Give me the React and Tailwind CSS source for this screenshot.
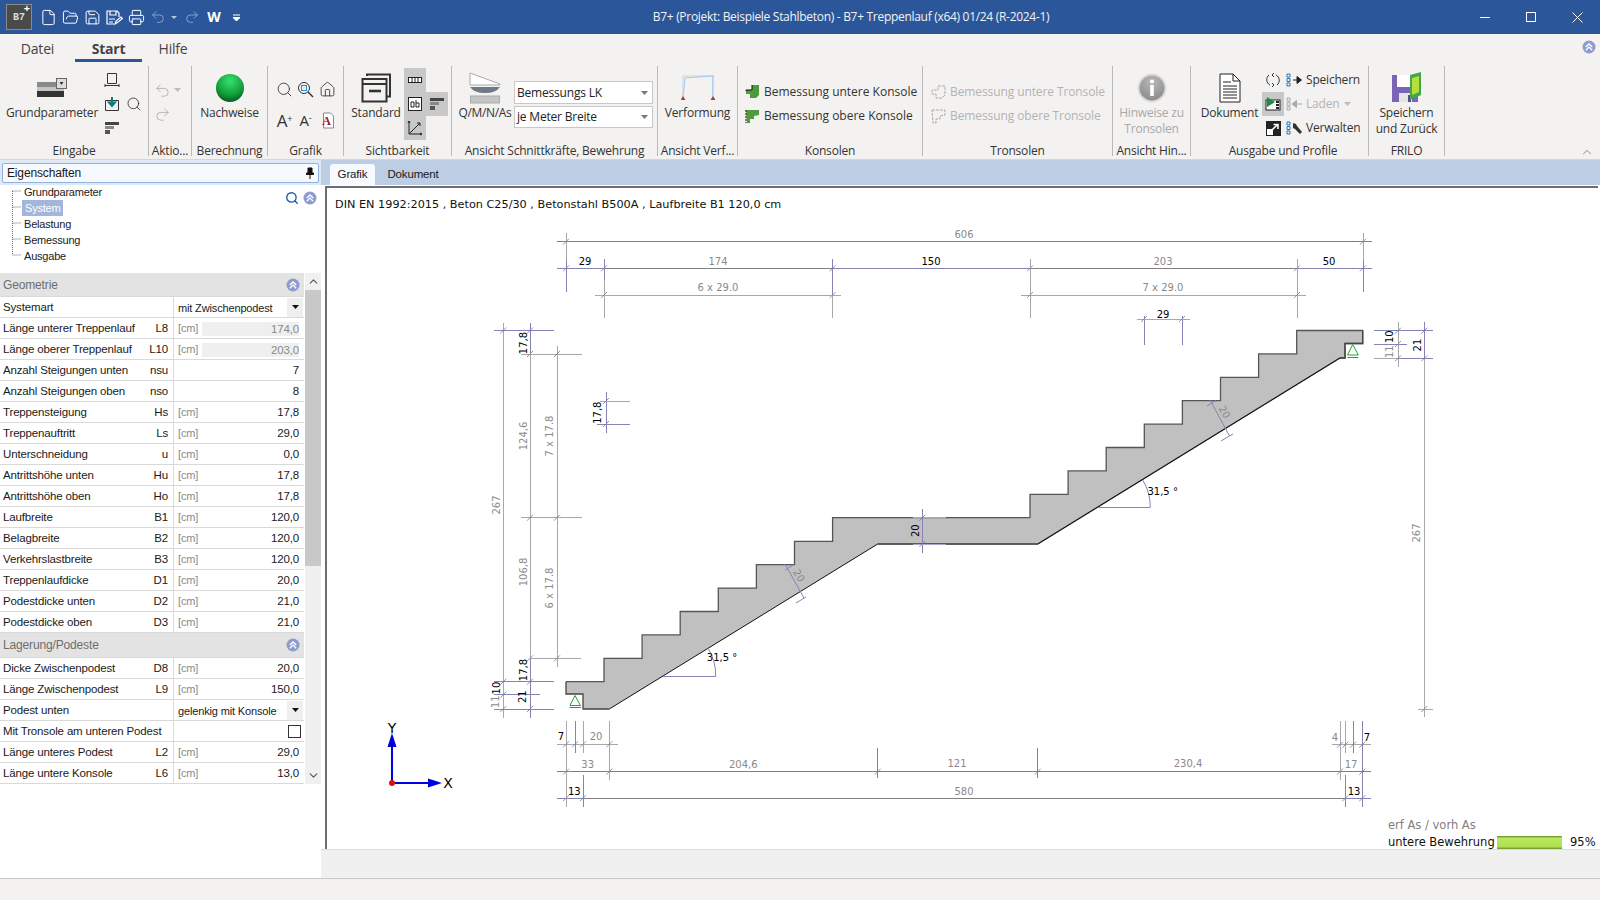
import React from "react";
import { File, FolderOpen, Save, Printer, Undo2, Redo2, Search, House, ChevronUp, ChevronDown } from "lucide-react";

const G = "#a8a8a8";
const D = "#808080";
const P = "#8583b5";

// steps of the stair, page coordinates
const stair =
  "566,681.7 604,681.7 604,658.3 642.1,658.3 642.1,634.9 680.2,634.9 680.2,611.5 718.3,611.5 718.3,588.1 756.4,588.1 756.4,564.7 794.5,564.7 794.5,541.3 832.6,541.3 832.6,517.7 1030,517.7 1030,494.3 1068.1,494.3 1068.1,470.9 1106.2,470.9 1106.2,447.5 1144.3,447.5 1144.3,424.1 1182.4,424.1 1182.4,400.7 1220.5,400.7 1220.5,377.3 1258.6,377.3 1258.6,353.9 1296.7,353.9 1296.7,330.5 1362.7,330.5 1362.7,343.5 1345,343.5 1345,358 1340,358 1037.7,544 877.7,544 609.3,709 583,709 583,694 566,694";

const lines = [
  // top dimension chains
  [557, 241.7, 1372, 241.7, D], [557, 268.3, 604, 268.3, P], [604, 268.3, 832.6, 268.3, D], [832.6, 268.3, 1030, 268.3, P], [1030, 268.3, 1297, 268.3, D], [1297, 268.3, 1372, 268.3, P],
  [595, 295, 841, 295, G], [1021, 295, 1306, 295, G],
  [566, 233, 566, 260, G], [566, 260, 566, 292, P], [1363, 233, 1363, 260, G], [1363, 260, 1363, 292, P],
  [604, 259, 604, 280, P], [604, 280, 604, 318, G], [832.6, 259, 832.6, 295, P], [832.6, 295, 832.6, 318, G],
  [1030, 259, 1030, 318, G], [1297, 259, 1297, 318, G],
  [1144, 316, 1144, 345, P], [1182, 316, 1182, 345, P], [1137, 319, 1190, 319, G],
  // left chains
  [503.3, 323, 503.3, 718, G], [530, 323, 530, 354, P], [530, 354, 530, 658, G], [530, 658, 530, 718, P], [557, 346, 557, 667, G],
  [494, 330.5, 554, 330.5, P], [521, 354, 582, 354, G], [521, 517.7, 582, 517.7, G], [530, 658.3, 581, 658.3, G], [494, 681.7, 554, 681.7, P], [494, 694.7, 540, 694.7, P], [494, 709, 554, 709, P],
  [606, 392, 606, 433, P], [600, 401, 630, 401, G], [597, 424, 630, 424, P],
  // right chains
  [1398, 322, 1398, 367, G], [1424.3, 322, 1424.3, 358, P], [1424.3, 358, 1424.3, 717, G],
  [1374, 330.7, 1433, 330.7, P], [1374, 344, 1407, 344, P], [1374, 358.3, 1398, 358.3, G], [1398, 358.3, 1433, 358.3, P], [1418, 709, 1433, 709, G],
  // landing thickness
  [922.3, 509, 922.3, 553, P], [913, 517.7, 946, 517.7, "#a9a6c9"], [913, 544, 946, 544, "#a9a6c9"],
  // flight thickness
  [785, 564, 804, 598, P], [1210, 400, 1229.6, 436, P], [785, 570, 794, 564.5, P], [796, 603, 806, 597, P], [1207, 406, 1216, 400.5, P], [1221, 441, 1233, 434, P],
  // bottom chains
  [557, 744.3, 618, 744.3, G], [1332, 744.7, 1371, 744.7, G], [557, 771.7, 1371, 771.7, D], [557, 798.2, 583, 798.2, P], [583, 798.2, 1345, 798.2, D], [1345, 798.2, 1371, 798.2, P],
  [566, 721, 566, 807, G], [575, 721, 575, 753, P], [583, 721, 583, 753, G], [583, 775, 583, 807, P], [609.3, 721, 609.3, 780, G],
  [877.7, 748, 877.7, 778, D], [1037.7, 748, 1037.7, 778, D],
  [1340, 721, 1340, 780, G], [1345.3, 721, 1345.3, 753, G], [1345.3, 775, 1345.3, 807, P], [1353, 721, 1353, 753, P], [1362.3, 721, 1362.3, 807, P],
  // angle legs
  [663.3, 676.7, 715.7, 676.7, P], [1098.3, 507, 1150.3, 507, P],
];

const ticks = [
  [566, 241.7], [1363, 241.7], [566, 268.3], [604, 268.3], [832.6, 268.3], [1030, 268.3], [1297, 268.3], [1363, 268.3], [604, 295], [832.6, 295], [1030, 295], [1297, 295],
  [1144, 319], [1182, 319], [606, 401], [606, 424],
  [503.3, 330.5], [530, 330.5], [530, 354], [557, 354], [530, 517.7], [557, 517.7], [530, 658.3], [557, 658.3], [503.3, 681.7], [530, 681.7], [503.3, 694.7], [503.3, 709], [530, 709],
  [1398, 330.7], [1424.3, 330.7], [1398, 344], [1398, 358.3], [1424.3, 358.3], [1424.3, 709],
  [922.3, 517.7], [922.3, 544],
  [566, 744.3], [575, 744.3], [583, 744.3], [609.3, 744.3], [566, 771.7], [609.3, 771.7], [877.7, 771.7], [1037.7, 771.7], [1340, 771.7], [1362.3, 771.7], [566, 798.2], [583, 798.2], [1345.3, 798.2], [1362.3, 798.2],
  [1340, 744.7], [1345.3, 744.7], [1353, 744.7], [1362.3, 744.7],
];

// x, y, text, black?, rotation
const labels = [
  [964, 234, "606"], [585, 261, "29", 1], [718, 261, "174"], [931, 261, "150", 1], [1163, 261, "203"], [1329, 261, "50", 1], [718, 287, "6 x 29.0"], [1163, 287, "7 x 29.0"], [1163, 314, "29", 1],
  [523, 343, "17,8", 1, -90], [496, 505, "267", 0, -90], [523, 436, "124,6", 0, -90], [523, 572, "106,8", 0, -90], [549, 436, "7 x 17.8", 0, -90], [549, 588, "6 x 17.8", 0, -90],
  [598, 412.7, "17,8", 1, -90], [523, 670, "17,8", 1, -90], [496, 688, "10", 1, -90], [496, 701.7, "11", 0, -90], [523, 696.7, "21", 1, -90],
  [1390, 336.7, "10", 1, -90], [1390, 351.7, "11", 0, -90], [1417, 345, "21", 1, -90], [1416.5, 533, "267", 0, -90],
  [916, 530.7, "20", 1, -90], [799, 575.5, "20", 0, 60], [1224.5, 412, "20", 0, 60],
  [722, 657.7, "31,5 °", 1], [1162.7, 491.7, "31,5 °", 1],
  [561, 736.7, "7", 1], [596, 736.7, "20"], [587.7, 764, "33"], [743.3, 764, "204,6"], [574.3, 791, "13", 1], [957, 763.5, "121"], [1188, 763.5, "230,4"], [964, 791, "580"],
  [1335, 737, "4"], [1367, 737, "7", 1], [1351, 764, "17"], [1354, 791, "13", 1],
];

// sharp 1px lines for everything axis aligned
const snap = (v) => Math.floor(v) + 0.5;

function StairDrawing() {
  return (
    <svg width="1271" height="661" viewBox="327 188 1271 661" className="block font-['DejaVu_Sans',sans-serif]">
      <polygon points={stair} fill="#c0c0c0" />
      <polyline points={stair.split(" ").slice(0, 38).join(" ")} fill="none" stroke="#555" strokeWidth="1.3" />
      <polyline points="1340,358 1037.7,544" fill="none" stroke="#111" strokeWidth="1" />
      <polyline points="877.7,544 609.3,709" fill="none" stroke="#111" strokeWidth="1" />
      <polyline points="1037.7,544 877.7,544" fill="none" stroke="#555" strokeWidth="1.3" />
      <polyline points="609.3,709 583,709 583,694 566,694 566,681.7" fill="none" stroke="#444" strokeWidth="1.3" />
      <polyline points="1362.7,330.5 1362.7,343.5 1345,343.5 1345,358 1340,358" fill="none" stroke="#444" strokeWidth="1.3" />

      {lines.map(([x1, y1, x2, y2, c], i) => {
        const flat = x1 === x2 || y1 === y2;
        return (
          <line
            key={i}
            x1={flat && x1 === x2 ? snap(x1) : x1}
            y1={flat && y1 === y2 ? snap(y1) : y1}
            x2={flat && x1 === x2 ? snap(x2) : x2}
            y2={flat && y1 === y2 ? snap(y2) : y2}
            stroke={c}
            strokeWidth="1"
          />
        );
      })}
      {ticks.map(([x, y], i) => (
        <line key={i} x1={x - 3} y1={y + 3} x2={x + 3} y2={y - 3} stroke="#77759c" strokeWidth="0.8" />
      ))}

      <path d="M715.7 676.7 A52 52 0 0 0 708 648" fill="none" stroke={P} />
      <path d="M1150.3 507 A52 52 0 0 0 1142.7 480" fill="none" stroke={P} />

      {/* supports */}
      <path d="M575 695.5 L570 705.5 L580.5 705.5 Z M569.5 707.5 H581" fill="none" stroke="#27a336" strokeWidth="1" />
      <path d="M1352.7 344.5 L1347.5 355 L1358.3 355 Z M1347.5 357.5 H1358.3" fill="none" stroke="#27a336" strokeWidth="1" />

      {labels.map(([x, y, t, black, rot], i) => (
        <text
          key={i}
          x={x}
          y={y}
          fontSize="10"
          textAnchor="middle"
          dominantBaseline="central"
          fill={black ? "#000" : "#8a8a8a"}
          transform={rot ? `rotate(${rot} ${x} ${y})` : undefined}
        >
          {t}
        </text>
      ))}

      {/* axes */}
      <line x1="392" y1="783" x2="392" y2="738" stroke="#0000e0" strokeWidth="2" />
      <polygon points="392,733 387.5,747 396.5,747" fill="#0000e0" />
      <line x1="392" y1="783" x2="436" y2="783" stroke="#0000e0" strokeWidth="2" />
      <polygon points="442,783 428,778.5 428,787.5" fill="#0000e0" />
      <circle cx="392" cy="783" r="3" fill="#e01010" />
      <text x="392" y="733" fontSize="14" textAnchor="middle" fill="#000">Y</text>
      <text x="448" y="788" fontSize="14" textAnchor="middle" fill="#000">X</text>
    </svg>
  );
}

function Chevrons({ className = "" }) {
  return (
    <svg width="14" height="14" viewBox="0 0 14 14" className={className}>
      <circle cx="7" cy="7" r="6.5" fill="#8f9bd0" />
      <path d="M3.8 7 L7 3.9 L10.2 7 M3.8 10.2 L7 7.1 L10.2 10.2" fill="none" stroke="#fff" strokeWidth="1.4" />
    </svg>
  );
}

function Bars() {
  return (
    <svg width="16" height="14" viewBox="0 0 16 14">
      <path d="M1 1h14v3H1z" fill="#444" />
      <path d="M1 5h9v3H1z" fill="#888" />
      <path d="M1 9h5v4H1z" fill="#555" />
    </svg>
  );
}

function BigButton({ icon, children, disabled }) {
  return (
    <div className={`flex flex-col items-center ${disabled ? "text-[#a9a9a9]" : "text-[#333]"}`}>
      <div className="h-[35px] mt-[4px] flex items-center justify-center">{icon}</div>
      <div className="leading-[16px] text-center whitespace-nowrap">{children}</div>
    </div>
  );
}

function Group({ w, label, labelClass = "", children }) {
  return (
    <div className={`h-[90px] flex flex-col shrink-0 ${w} border-r border-[#b9b9b9]`}>
      <div className="h-[81px] flex">{children}</div>
      <div className={`h-[10px] flex items-center justify-center text-[#333] whitespace-nowrap ${labelClass}`}>{label}</div>
    </div>
  );
}

function Ribbon() {
  return (
    <div className="h-[98px] pt-[4px] flex bg-[#f3f2f1] border-b border-[#d6d6d6] text-[12px] font-['Open_Sans',sans-serif] tracking-[-0.2px]">
      <Group w="w-[149px]" label="Eingabe">
        <div className="w-[104px]">
          <BigButton
            icon={
              <svg width="32" height="20" viewBox="0 0 32 20">
                <path d="M1 4h27v5H1z" fill="#8a8a8a" />
                <path d="M1 9h27v4H1z" fill="#c4c4c4" />
                <path d="M1 13h27v6H1z" fill="#333" />
                <rect x="20.5" y="0.5" width="10" height="10" fill="#ddd" stroke="#666" />
                <path d="M23.5 4h4l-2 3z" fill="#333" />
              </svg>
            }
          >
            Grundparameter
          </BigButton>
        </div>
        <div className="w-[20px] -ml-[2px] flex flex-col">
          <div className="h-[24px] mt-[2px] flex items-center justify-center">
            <svg width="16" height="16" viewBox="0 0 16 16" fill="none" stroke="#333"><path d="M3.5 1.5h9v10h-9zM1 13.5h14M1 12v3M15 12v3" /></svg>
          </div>
          <div className="h-[24px] flex items-center justify-center">
            <svg width="16" height="16" viewBox="0 0 16 16" fill="none"><path d="M1.5 4.5h13v10h-13z" stroke="#333" /><path d="M8 1v8M5 6.5L8 10l3-3.5z" stroke="#0b7d84" strokeWidth="2" /></svg>
          </div>
          <div className="h-[24px] flex items-center justify-center"><Bars /></div>
        </div>
        <div className="w-[24px] flex flex-col items-center pt-[26px]">
          <div className="h-[24px] flex items-center"><Search size={16} strokeWidth={1.3} color="#333" /></div>
        </div>
      </Group>

      <Group w="w-[43px]" label="Aktio...">
        <div className="pl-[5px] mt-[12px] text-[#aaa]">
          <div className="h-[24px] flex items-center gap-[3px]">
            <Undo2 size={17} strokeWidth={1.2} />
            <svg width="7" height="4"><path d="M0 0h7L3.5 4z" fill="#bbb" /></svg>
          </div>
          <div className="h-[24px] flex items-center"><Redo2 size={17} strokeWidth={1.2} /></div>
        </div>
      </Group>

      <Group w="w-[76px]" label="Berechnung">
        <div className="w-full">
          <BigButton
            icon={
              <svg width="30" height="30" viewBox="0 0 30 30">
                <defs>
                  <radialGradient id="ball" cx="50%" cy="25%" r="75%">
                    <stop offset="0%" stopColor="#38e070" />
                    <stop offset="65%" stopColor="#12a03c" />
                    <stop offset="100%" stopColor="#0a5a24" />
                  </radialGradient>
                </defs>
                <circle cx="15" cy="15" r="14" fill="url(#ball)" />
              </svg>
            }
          >
            Nachweise
          </BigButton>
        </div>
      </Group>

      <Group w="w-[76px]" label="Grafik">
        <div className="pl-[6px] mt-[8px] grid grid-cols-[21px_21px_22px] grid-rows-[30px_30px] gap-y-[1px] justify-items-center items-center text-[#333]">
          <Search size={17} strokeWidth={1.2} />
          <svg width="17" height="17" viewBox="0 0 17 17" fill="none"><circle cx="7" cy="7" r="5.5" stroke="#333" /><path d="M11 11l5 5" stroke="#333" strokeWidth="1.4" /><rect x="4.5" y="4.5" width="5" height="5" stroke="#1f8fd6" /></svg>
          <House size={17} strokeWidth={1.2} />
          <span className="text-[17px] leading-none text-[#333]">A<sup className="text-[9px]">+</sup></span>
          <span className="text-[15px] leading-none text-[#333]">A<sup className="text-[9px]">-</sup></span>
          <svg width="15" height="17" viewBox="0 0 15 17"><path d="M3.5 1h7l3 3v12h-10z" fill="#fff" stroke="#888" /><text x="6.5" y="13" fontSize="12" fontWeight="700" fontFamily="Liberation Serif" textAnchor="middle" fill="#a01818">A</text></svg>
        </div>
      </Group>

      <Group w="w-[108px]" label="Sichtbarkeit">
        <div className="w-[60px] ml-[2px]">
          <BigButton
            icon={
              <svg width="30" height="30" viewBox="0 0 30 30" fill="none" stroke="#333" strokeWidth="2">
                <path d="M6 3V1.5h23v22h-3" />
                <rect x="1.5" y="6" width="24" height="22.5" />
                <path d="M1.5 11h24" />
                <path d="M8 18h12" strokeWidth="2.6" />
              </svg>
            }
          >
            Standard
          </BigButton>
        </div>
        <div className="flex flex-col mt-[2px] -ml-[2px]">
          <div className="w-[22px] h-[24px] bg-[#c8c8c8] flex items-center justify-center">
            <svg width="14" height="6"><rect x="0.5" y="0.5" width="13" height="5" fill="#fff" stroke="#222" /><path d="M4 1v4M7 1v4M10 1v4" stroke="#222" /></svg>
          </div>
          <div className="w-[44px] h-[24px] bg-[#c8c8c8] flex items-center">
            <div className="w-[22px] flex justify-center">
              <svg width="14" height="14" viewBox="0 0 14 14"><rect x="0.5" y="0.5" width="13" height="13" fill="#fff" stroke="#222" /><path d="M3 5h3v5H3zM8 3v7h3V6H8M12 5" fill="none" stroke="#222" /></svg>
            </div>
            <div className="w-[22px] flex justify-center"><Bars /></div>
          </div>
          <div className="w-[22px] h-[24px] bg-[#c8c8c8] flex items-center justify-center">
            <svg width="16" height="16" viewBox="0 0 16 16" fill="none" stroke="#222"><path d="M2 1v13h13M2 14L13 3M10 3h3v3M2 1L1 3M2 1l1 2M15 14l-2-1M15 14l-2 1" /></svg>
          </div>
        </div>
      </Group>

      <Group w="w-[206px]" label="Ansicht Schnittkräfte, Bewehrung">
        <div className="w-[62px] ml-[2px] tracking-[-0.35px]">
          <BigButton
            icon={
              <svg width="32" height="32" viewBox="0 0 32 32">
                <path d="M1 1v12h30V12L1 1z" fill="#fff" stroke="#aaa" />
                <path d="M1 15h30q-4 6-15 6T1 15z" fill="#707a86" />
                <rect x="1.5" y="24" width="29" height="7" fill="#c4c4c4" stroke="#aaa" />
              </svg>
            }
          >
            Q/M/N/As
          </BigButton>
        </div>
        <div className="w-[139px] -ml-[2px] mt-[15px] flex flex-col gap-[2px] text-[#222]">
          <div className="h-[23px] bg-white border border-[#c8c8c8] flex items-center justify-between pl-[2px] pr-[4px]">
            <span>Bemessungs LK</span>
            <svg width="7" height="4"><path d="M0 0h7L3.5 4z" fill="#777" /></svg>
          </div>
          <div className="h-[22px] bg-white border border-[#c8c8c8] flex items-center justify-between pl-[2px] pr-[4px]">
            <span>je Meter Breite</span>
            <svg width="7" height="4"><path d="M0 0h7L3.5 4z" fill="#777" /></svg>
          </div>
        </div>
      </Group>

      <Group w="w-[80px]" label="Ansicht Verf...">
        <div className="w-full">
          <BigButton
            icon={
              <svg width="34" height="30" viewBox="0 0 34 30" fill="none">
                <path d="M2 25V3h30v22" stroke="#ddd" strokeWidth="1.5" />
                <path d="M2 25L4 5l28-2-.5 22" stroke="#a8cdf5" strokeWidth="1.2" />
                <path d="M2 23l-2.5 4h5zM32 23l-2.5 4h5z" fill="#b03a3a" />
              </svg>
            }
          >
            Verformung
          </BigButton>
        </div>
      </Group>

      <Group w="w-[185px]" label="Konsolen">
        <div className="pl-[7px] mt-[14px] text-[#333] tracking-normal">
          <div className="h-[24px] flex items-center gap-[3px]">
            <svg width="16" height="16" viewBox="0 0 16 16"><path d="M7 1h7v10l-3 3H5v-4H1V6h6z" fill="#4f9a3a" /><path d="M7 1v5H1v1" stroke="#111" fill="none" /></svg>
            Bemessung untere Konsole
          </div>
          <div className="h-[24px] flex items-center gap-[3px]">
            <svg width="16" height="16" viewBox="0 0 16 16"><path d="M1 2h13v5l-5 1v3H5v4H2z" fill="#4f9a3a" /><path d="M1 2v13" stroke="#111" strokeDasharray="2 1" fill="none" /></svg>
            Bemessung obere Konsole
          </div>
        </div>
      </Group>

      <Group w="w-[190px]" label="Tronsolen">
        <div className="pl-[8px] mt-[14px] text-[#b3b3b3] tracking-[-0.1px]">
          <div className="h-[24px] flex items-center gap-[3px]">
            <svg width="16" height="16" viewBox="0 0 16 16" fill="none" stroke="#aaa"><path d="M7 2h7v9l-3 3H5v-4H1V6h6z" strokeDasharray="3 1" /></svg>
            Bemessung untere Tronsole
          </div>
          <div className="h-[24px] flex items-center gap-[3px]">
            <svg width="16" height="16" viewBox="0 0 16 16" fill="none" stroke="#aaa"><path d="M1 2h13v5l-5 1v3H5v4H2z" strokeDasharray="3 1" /></svg>
            Bemessung obere Tronsole
          </div>
        </div>
      </Group>

      <Group w="w-[78px]" label="Ansicht Hin...">
        <div className="w-full">
          <BigButton
            disabled
            icon={
              <svg width="30" height="30" viewBox="0 0 30 30">
                <defs>
                  <radialGradient id="info" cx="50%" cy="25%" r="80%">
                    <stop offset="0%" stopColor="#b8b8b8" />
                    <stop offset="100%" stopColor="#8a8a8a" />
                  </radialGradient>
                </defs>
                <circle cx="15" cy="15" r="14.5" fill="#dcdcdc" />
                <circle cx="15" cy="15" r="12.5" fill="url(#info)" />
                <circle cx="15" cy="8.5" r="2" fill="#fff" />
                <rect x="13.2" y="12" width="3.6" height="11" fill="#fff" />
              </svg>
            }
          >
            Hinweise zu
            <br />
            Tronsolen
          </BigButton>
        </div>
      </Group>

      <Group w="w-[178px]" label="Ausgabe und Profile" labelClass="pl-[7px]">
        <div className="w-[65px] ml-[6px]">
          <BigButton
            icon={
              <svg width="22" height="30" viewBox="0 0 22 30" fill="none" stroke="#222">
                <path d="M1 1h13l7 7v21H1z" fill="#fff" />
                <path d="M14 1v7h7M4 9h8M4 13h14M4 16h14M4 19h14M4 22h14M4 25h14" />
              </svg>
            }
          >
            Dokument
          </BigButton>
        </div>
        <div className="flex flex-col mt-[2px]">
          <div className="h-[24px] flex items-center">
            <div className="w-[22px] flex justify-center">
              <svg width="16" height="16" viewBox="0 0 16 16" fill="none" stroke="#333"><path d="M11 3a6 6 0 0 1 1 10M5 13A6 6 0 0 1 4 3M9 1L7 3l2 2M7 11l2 2-2 2" /></svg>
            </div>
            <div className="w-[22px] pl-[2px]">
              <svg width="18" height="14" viewBox="0 0 18 14"><path d="M1 1h3v3H1zM1 5.5h3v3H1zM1 10h3v3H1z" fill="none" stroke="#2b78b5" /><path d="M7 7h7M11 3.5L15.5 7 11 10.5z" stroke="#222" fill="#222" /></svg>
            </div>
            <span className="text-[#333]">Speichern</span>
          </div>
          <div className="h-[24px] flex items-center">
            <div className="w-[22px] h-[24px] bg-[#c8c8c8] flex justify-center items-center">
              <svg width="16" height="16" viewBox="0 0 16 16"><rect x="1" y="4" width="14" height="10" fill="#fff" stroke="#222" /><path d="M11 5h3v2h-3zM11 8h3v2h-3zM11 11h3v2h-3z" fill="#222" /><path d="M2 1l8 5-8 5z" fill="#159040" /></svg>
            </div>
            <div className="w-[22px] pl-[2px]">
              <svg width="18" height="14" viewBox="0 0 18 14"><path d="M1 1h3v3H1zM1 5.5h3v3H1zM1 10h3v3H1z" fill="none" stroke="#aaa" /><path d="M9 7h7M10.5 3.5L6 7l4.5 3.5z" stroke="#aaa" fill="#aaa" /></svg>
            </div>
            <span className="text-[#b3b3b3] flex items-center gap-[5px]">
              Laden
              <svg width="7" height="4"><path d="M0 0h7L3.5 4z" fill="#bbb" /></svg>
            </span>
          </div>
          <div className="h-[24px] flex items-center">
            <div className="w-[22px] flex justify-center">
              <svg width="15" height="15" viewBox="0 0 15 15"><rect width="15" height="15" fill="#222" /><path d="M1 8h6v6H1z" fill="#fff" /><path d="M6 9l5-5M7.5 3.5h4.5v4.5" stroke="#fff" strokeWidth="1.6" fill="none" /></svg>
            </div>
            <div className="w-[22px] pl-[2px]">
              <svg width="18" height="14" viewBox="0 0 18 14"><path d="M1 1h3v3H1zM1 5.5h3v3H1zM1 10h3v3H1z" fill="none" stroke="#2b78b5" /><path d="M7 2l3 1 1 2 5 6-2 2-5-5-2-1z" fill="#333" /></svg>
            </div>
            <span className="text-[#333]">Verwalten</span>
          </div>
        </div>
      </Group>

      <Group w="w-[76px]" label="FRILO">
        <div className="w-full">
          <BigButton
            icon={
              <svg width="30" height="32" viewBox="0 0 30 32">
                <path d="M0 3h26v27H0z" fill="#7a64b8" />
                <path d="M5 3h14v12H5z" fill="#fff" />
                <path d="M7 21h13v9H7z" fill="#e4e4e4" />
                <path d="M16 23h3v7h-3z" fill="#5a4a98" />
                <path d="M18 3l11-3v23l-11 5z" fill="#3fa84a" />
                <path d="M20 6l7-2v16l-7 3z" fill="#b5e03a" />
              </svg>
            }
          >
            Speichern
            <br />
            und Zurück
          </BigButton>
        </div>
      </Group>

      <div className="flex-1 flex items-end justify-end pr-[6px] pb-[0px]">
        <ChevronUp size={14} strokeWidth={1} color="#444" />
      </div>
    </div>
  );
}

function TitleBar() {
  const icon = "w-[22px] flex justify-center";
  return (
    <div className="h-[34px] bg-[#2b579a] flex items-center text-white font-['Open_Sans',sans-serif]">
      <div className="ml-[6px] w-[26px] h-[26px] mr-[5px] bg-[#4a4a4a] border border-[#8a8a8a] flex items-center justify-center relative">
        <span className="font-['Liberation_Mono',monospace] text-[10px] font-bold text-[#ddd]">B7</span>
        <span className="absolute -top-[3px] right-[1px] text-[11px] leading-none font-bold">+</span>
      </div>
      <div className={icon}><File size={17} strokeWidth={1.4} /></div>
      <div className={icon}><FolderOpen size={17} strokeWidth={1.4} /></div>
      <div className={icon}><Save size={17} strokeWidth={1.4} /></div>
      <div className={icon}>
        <svg width="18" height="17" viewBox="0 0 18 17" fill="none" stroke="#fff" strokeWidth="1.2">
          <path d="M9 15H2V2h10l2 2v4M5 2v4h6V2M4 10h6M4 13h4" />
          <path d="M10 15l1-3 5-4 1.5 1.5-5 4z" />
        </svg>
      </div>
      <div className={icon}><Printer size={17} strokeWidth={1.4} /></div>
      <div className={`${icon} text-[#8ea6cc]`}><Undo2 size={16} strokeWidth={1.4} /></div>
      <div className="w-[10px] flex justify-center"><svg width="6" height="3"><path d="M0 0h6L3 3z" fill="#b9c8e0" /></svg></div>
      <div className={`${icon} ml-[2px] text-[#8ea6cc]`}><Redo2 size={16} strokeWidth={1.4} /></div>
      <div className={`${icon} font-bold text-[14px] leading-none`}>W</div>
      <div className={icon}><svg width="7" height="7"><path d="M0 1h7M0 3.5h7L3.5 7z" stroke="#fff" fill="#fff" /></svg></div>
      <div className="flex-1 pr-[7px] text-center text-[12px] tracking-[-0.3px] text-[#f2f2f2]">
        B7+ (Projekt: Beispiele Stahlbeton) - B7+ Treppenlauf (x64) 01/24 (R-2024-1)
      </div>
      <div className="w-[46px] flex justify-center">
        <svg width="10" height="10" fill="none" stroke="#fff"><path d="M0 5.5h10" /></svg>
      </div>
      <div className="w-[46px] flex justify-center">
        <svg width="10" height="10" fill="none" stroke="#fff"><rect x="0.5" y="0.5" width="9" height="9" /></svg>
      </div>
      <div className="w-[46px] flex justify-center">
        <svg width="11" height="11" fill="none" stroke="#fff"><path d="M0.5 0.5l10 10M10.5 0.5l-10 10" /></svg>
      </div>
    </div>
  );
}

function Row({ label, sym, unit = true, value, shaded }) {
  return (
    <div className="h-[21px] flex border-b border-[#d9d9d9]">
      <div className="w-[174px] pl-[3px] pr-[5px] pt-[2px] flex items-center justify-between border-r border-[#d9d9d9] whitespace-nowrap">
        <span>{label}</span>
        {sym && <span>{sym}</span>}
      </div>
      <div className="flex-1 flex items-center pl-[4px] pr-[5px] pt-[1px]">
        {unit && <span className="text-[#8a8a8a] text-[11px] w-[24px]">[cm]</span>}
        <span className={`flex-1 text-right ${shaded ? "bg-[#efefef] text-[#8a8a8a] leading-[14px]" : ""}`}>{value}</span>
      </div>
    </div>
  );
}

function SelectRow({ label, value }) {
  return (
    <div className="h-[21px] flex border-b border-[#d9d9d9]">
      <div className="w-[174px] pl-[3px] pt-[2px] flex items-center border-r border-[#d9d9d9]">{label}</div>
      <div className="flex-1 flex items-center justify-between pl-[4px] pr-[1px]">
        <span className="text-[11px] pt-[2px]">{value}</span>
        <span className="w-[16px] h-[19px] bg-[#efefef] flex items-center justify-center">
          <svg width="7" height="4"><path d="M0 0h7L3.5 4z" fill="#111" /></svg>
        </span>
      </div>
    </div>
  );
}

function SectionHead({ title, h }) {
  return (
    <div className={`${h} bg-[#e3e3e3] border-b border-[#d9d9d9] flex items-center justify-between pl-[3px] pr-[4px] text-[#6e6e6e]`}>
      <span className="text-[12px]">{title}</span>
      <Chevrons />
    </div>
  );
}

function Properties() {
  return (
    <div className="w-[321px] bg-white flex flex-col text-[11.5px] text-[#1a1a1a] font-['Liberation_Sans',sans-serif] tracking-[-0.15px]">
      <div className="h-[25px] bg-[#dfe9f5] px-[2px] pt-[3px]">
        <div className="h-[20px] bg-[#f6f9fe] border border-[#8fb3e0] rounded-[2px] flex items-center justify-between pl-[4px] pr-[3px] text-[12px]">
          <span>Eigenschaften</span>
          <svg width="10" height="12" viewBox="0 0 10 12"><path d="M3 1h4v5h1.5v1.5h-7V6H3zM5 7.5V12" stroke="#111" fill="#111" /></svg>
        </div>
      </div>

      <div className="h-[88px] relative flex text-[11px] tracking-[-0.2px]">
        <svg width="22" height="80" className="shrink-0 -mt-[1px]" fill="none" stroke="#666" strokeDasharray="1 1">
          <path d="M12.5 7V71M12.5 7H21M12.5 23H21M12.5 39H21M12.5 55H21M12.5 71H21" />
        </svg>
        <div className="-mt-[1px]">
          <div className="h-[16px] flex items-center pl-[2px]">Grundparameter</div>
          <div className="h-[16px] w-fit flex items-center px-[3px] bg-[#a4b5dc] text-white">System</div>
          <div className="h-[16px] flex items-center pl-[2px]">Belastung</div>
          <div className="h-[16px] flex items-center pl-[2px]">Bemessung</div>
          <div className="h-[16px] flex items-center pl-[2px]">Ausgabe</div>
        </div>
        <div className="absolute top-[6px] right-[4px] flex items-center gap-[4px]">
          <Search size={14} strokeWidth={2.4} color="#1f5fa8" />
          <Chevrons />
        </div>
      </div>

      <div className="flex">
        <div className="w-[304px]">
          <SectionHead title="Geometrie" h="h-[24px]" />
          <SelectRow label="Systemart" value="mit Zwischenpodest" />
          <Row label="Länge unterer Treppenlauf" sym="L8" value="174,0" shaded />
          <Row label="Länge oberer Treppenlauf" sym="L10" value="203,0" shaded />
          <Row label="Anzahl Steigungen unten" sym="nsu" unit={false} value="7" />
          <Row label="Anzahl Steigungen oben" sym="nso" unit={false} value="8" />
          <Row label="Treppensteigung" sym="Hs" value="17,8" />
          <Row label="Treppenauftritt" sym="Ls" value="29,0" />
          <Row label="Unterschneidung" sym="u" value="0,0" />
          <Row label="Antrittshöhe unten" sym="Hu" value="17,8" />
          <Row label="Antrittshöhe oben" sym="Ho" value="17,8" />
          <Row label="Laufbreite" sym="B1" value="120,0" />
          <Row label="Belagbreite" sym="B2" value="120,0" />
          <Row label="Verkehrslastbreite" sym="B3" value="120,0" />
          <Row label="Treppenlaufdicke" sym="D1" value="20,0" />
          <Row label="Podestdicke unten" sym="D2" value="21,0" />
          <Row label="Podestdicke oben" sym="D3" value="21,0" />
          <SectionHead title="Lagerung/Podeste" h="h-[25px]" />
          <Row label="Dicke Zwischenpodest" sym="D8" value="20,0" />
          <Row label="Länge Zwischenpodest" sym="L9" value="150,0" />
          <SelectRow label="Podest unten" value="gelenkig mit Konsole" />
          <div className="h-[21px] flex border-b border-[#d9d9d9]">
            <div className="w-[174px] pl-[3px] pt-[2px] flex items-center border-r border-[#d9d9d9] whitespace-nowrap">Mit Tronsole am unteren Podest</div>
            <div className="flex-1 flex items-center justify-end pr-[3px]">
              <span className="w-[13px] h-[13px] border border-[#333] bg-white" />
            </div>
          </div>
          <Row label="Länge unteres Podest" sym="L2" value="29,0" />
          <Row label="Länge untere Konsole" sym="L6" value="13,0" />
        </div>
        <div className="w-[16px] ml-[1px] bg-[#f0f0f0] flex flex-col items-center">
          <div className="h-[17px] flex items-center"><ChevronUp size={13} strokeWidth={2} color="#555" /></div>
          <div className="w-full h-[276px] bg-[#c8c8c8]" />
          <div className="flex-1" />
          <div className="h-[17px] flex items-center"><ChevronDown size={13} strokeWidth={2} color="#555" /></div>
        </div>
      </div>
    </div>
  );
}

function Drawing() {
  return (
    <div className="flex-1 flex flex-col bg-white">
      <div className="h-[25px] bg-[#bccde4] flex items-end pl-[9px] text-[11.5px] font-['Liberation_Sans',sans-serif] tracking-[-0.15px] text-[#1a1a1a]">
        <div className="w-[45px] h-[21px] bg-[#f6f9fe] rounded-t-[3px] flex items-center justify-center">Grafik</div>
        <div className="w-[66px] h-[21px] ml-[5px] flex items-center justify-center">Dokument</div>
      </div>
      <div className="h-[663px] ml-[4px] mr-[2px] mt-[1px] border-l-2 border-t-2 border-[#6e6e6e] relative">
        <StairDrawing />
        <div className="absolute left-[8px] top-[9px] text-[11.25px] font-['DejaVu_Sans',sans-serif] text-[#111] whitespace-nowrap">
          DIN EN 1992:2015 , Beton C25/30 , Betonstahl B500A , Laufbreite B1 120,0 cm
        </div>
        <div className="absolute left-[1061px] -bottom-[2px] text-[11.5px] font-['DejaVu_Sans',sans-serif] leading-[17px]">
          <div className="text-[#808080]">erf As / vorh As</div>
          <div className="flex items-center text-[#111] whitespace-nowrap">
            <span className="w-[109px]">untere Bewehrung</span>
            <span className="w-[68px] h-[13px] bg-white">
              <span className="block w-[65px] h-[13px] bg-[linear-gradient(#6a8f2a,#b8e860_18%,#b0e050_82%,#6a8f2a)]" />
            </span>
            <span className="ml-[5px]">95%</span>
          </div>
        </div>
      </div>
      <div className="flex-1 bg-[#f0f0f0] border-t border-[#dcdcdc]" />
    </div>
  );
}

export default function App() {
  return (
    <div className="w-[1600px] h-[900px] overflow-hidden flex flex-col bg-[#f3f2f1]">
      <TitleBar />
      <div className="h-[28px] flex items-end text-[14px] font-['Open_Sans',sans-serif] text-[#444] tracking-[-0.2px]">
        <div className="w-[75px] h-[28px] flex items-center justify-center">Datei</div>
        <div className="w-[67px] h-[28px] pt-[3px] flex items-center justify-center font-bold border-b-[3px] border-[#2b579a]">Start</div>
        <div className="w-[62px] h-[28px] flex items-center justify-center">Hilfe</div>
        <div className="flex-1 h-[28px] flex items-center justify-end pr-[4px] pb-[3px]"><Chevrons /></div>
      </div>
      <Ribbon />
      <div className="h-[718px] flex">
        <Properties />
        <Drawing />
      </div>
      <div className="flex-1 border-t border-[#c8c8c8] bg-[#f3f2f1]" />
    </div>
  );
}
